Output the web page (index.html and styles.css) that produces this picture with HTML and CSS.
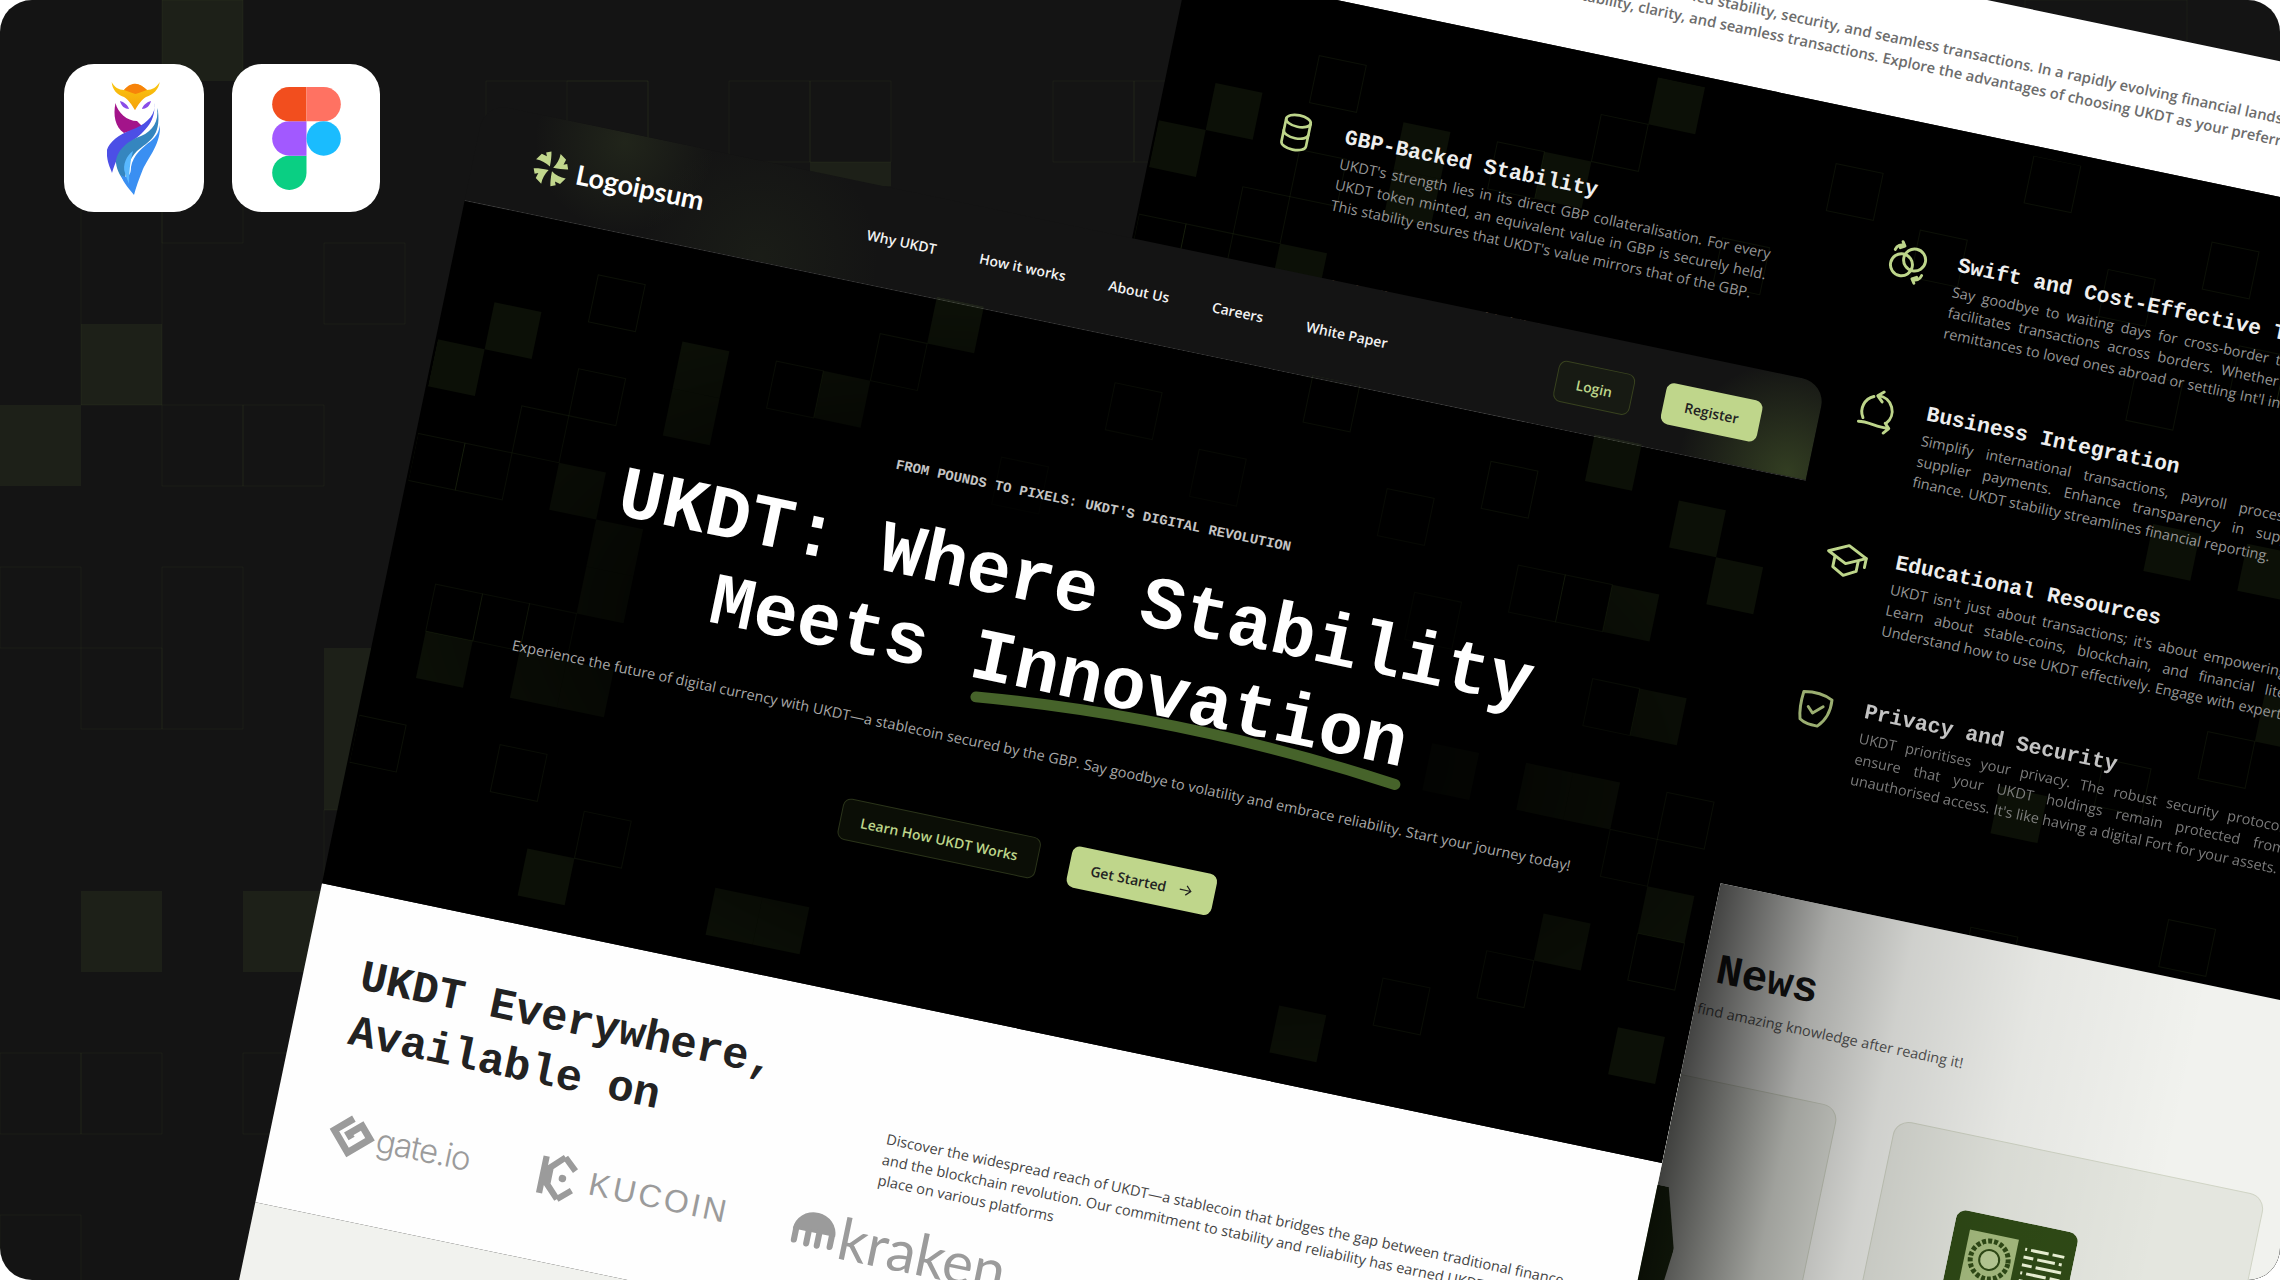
FILE: index.html
```html
<!DOCTYPE html>
<html lang="en">

<head>
    <meta charset="UTF-8">
    <title>UKDT design preview</title>
    <link rel="stylesheet" href="styles.css">
</head>

<body>
    <svg class="defs" width="0" height="0">
        <defs>
            <!-- pixel pattern shared by hero and features, one unit = one cell -->
            <g id="px">
                <g class="px-on">
                    <rect x="1" y="2" width="1" height="1" /><rect x="0" y="3" width="1" height="1" />
                    <rect x="5" y="2" width="1" height="1" /><rect x="5" y="3" width="1" height="1" />
                    <rect x="3" y="5" width="1" height="1" /><rect x="4" y="6" width="1" height="1" />
                    <rect x="4" y="7" width="1" height="1" /><rect x="1" y="9" width="1" height="1" />
                    <rect x="3" y="9" width="1" height="1" /><rect x="4" y="9" width="1" height="1" />
                    <rect x="4" y="13" width="1" height="1" /><rect x="8" y="13" width="1" height="1" />
                    <rect x="9" y="13" width="1" height="1" /><rect x="8" y="2" width="1" height="1" />
                    <rect x="10" y="0" width="1" height="1" /><rect x="20" y="13" width="1" height="1" />
                    <rect x="22" y="7" width="1" height="1" /><rect x="24" y="0" width="1" height="1" />
                    <rect x="24" y="7" width="1" height="1" /><rect x="25" y="7" width="1" height="1" />
                    <rect x="25" y="3" width="1" height="1" /><rect x="26" y="1" width="1" height="1" />
                    <rect x="27" y="2" width="1" height="1" /><rect x="26" y="5" width="1" height="1" />
                    <rect x="27" y="9" width="1" height="1" /><rect x="25" y="10" width="1" height="1" />
                    <rect x="27" y="12" width="1" height="1" />
                </g>
                <g class="px-off">
                    <rect x="3" y="1" width="1" height="1" /><rect x="3" y="3" width="1" height="1" />
                    <rect x="2" y="4" width="1" height="1" /><rect x="0" y="5" width="1" height="1" />
                    <rect x="1" y="5" width="1" height="1" /><rect x="2" y="8" width="1" height="1" />
                    <rect x="3" y="8" width="1" height="1" /><rect x="1" y="8" width="1" height="1" />
                    <rect x="0" y="11" width="1" height="1" /><rect x="3" y="11" width="1" height="1" />
                    <rect x="5" y="12" width="1" height="1" /><rect x="7" y="2" width="1" height="1" />
                    <rect x="9" y="1" width="1" height="1" /><rect x="12" y="3" width="1" height="1" />
                    <rect x="14" y="1" width="1" height="1" /><rect x="16" y="2" width="1" height="1" />
                    <rect x="18" y="0" width="1" height="1" /><rect x="20" y="2" width="1" height="1" />
                    <rect x="23" y="3" width="1" height="1" /><rect x="24" y="3" width="1" height="1" />
                    <rect x="22" y="1" width="1" height="1" /><rect x="25" y="5" width="1" height="1" />
                    <rect x="27" y="7" width="1" height="1" /><rect x="26" y="8" width="1" height="1" />
                    <rect x="24" y="11" width="1" height="1" /><rect x="22" y="12" width="1" height="1" />
                    <rect x="27" y="10" width="1" height="1" /><rect x="21" y="4" width="1" height="1" />
                </g>
            </g>
        </defs>
    </svg>

    <div class="frame">
        <svg class="page-pixels" viewBox="0 0 29 16">
            <g class="page-on">
                <rect x="2" y="0" width="1" height="1" /><rect x="1" y="4" width="1" height="1" />
                <rect x="0" y="5" width="1" height="1" /><rect x="1" y="11" width="1" height="1" />
                <rect x="3" y="11" width="1" height="1" /><rect x="10" y="2" width="1" height="0.3" />
                <rect x="4" y="8" width="1" height="1" /><rect x="4" y="9" width="1" height="1" />
            </g>
            <g class="page-off">
                <rect x="2" y="0" width="1" height="3" /><rect x="4" y="3" width="1" height="1" />
                <rect x="3" y="5" width="1" height="1" /><rect x="1" y="2" width="1" height="3" />
                <rect x="6" y="1" width="2" height="2" /><rect x="7" y="1" width="1" height="2" />
                <rect x="9" y="1" width="1" height="1" /><rect x="10" y="1" width="1" height="1" />
                <rect x="13" y="1" width="1" height="1" /><rect x="14" y="1" width="1" height="1" />
                <rect x="0" y="7" width="1" height="1" /><rect x="2" y="5" width="1" height="1" />
                <rect x="2" y="7" width="1" height="2" /><rect x="0" y="13" width="1" height="1" />
                <rect x="1" y="13" width="1" height="1" /><rect x="3" y="13" width="1" height="1" />
                <rect x="0" y="15" width="1" height="1" /><rect x="4" y="10" width="1" height="1" />
                <rect x="25" y="0" width="2" height="1" /><rect x="1" y="8" width="1" height="1" />
            </g>
        </svg>

        <div class="tiles">
            <div class="tile tile-owl">
                <svg class="owl" viewBox="0 0 54 114">
                    <defs>
                        <linearGradient id="crown" x1="0" y1="0" x2="0" y2="1">
                            <stop offset="0" stop-color="#f9c80e" />
                            <stop offset="1" stop-color="#f6a10c" />
                        </linearGradient>
                    </defs>
                    <path fill="#a3148a" d="M8.5 22C6 34 8 46 17 52L36 46L30 40C20 40 11 32 8.5 22Z" />
                    <path fill="#4c4fe6" d="M47 22C50 34 38 44 24 49C8 55-3 66 0 75C1 84 4 88 5 92C8 82 12 72 20 64C34 54 50 42 47 22Z" />
                    <path fill="#3586bf" d="M50 27C52 40 46 50 34 55C20 60 9 70 9 82C10 90 14 96 18 101C18 90 22 78 30 70C42 60 54 56 51 30Z" />
                    <path fill="#3a8ff2" d="M53 44C54 62 42 76 36 88C32 98 29 106 27 114C24 110 16 102 14 94C20 98 24 95 24 86C26 74 36 66 44 60C50 55 52 50 53 44Z" />
                    <path fill="#58b8ff" d="M26 70C20 74 15 84 18 92C19 96 21 100 22 103C22 92 23 80 26 70Z" />
                    <path fill="url(#crown)" d="M4.7 1C5 8 10 14 17 16C21 18 25 24 28 29.3C31 24 35 18 39 16C46 14 52 8 52.7 1C50 6 45 9 40 9C36 5 32 3 28.5 3C25 3 21 5 17 9C12 9 7 6 4.7 1Z" />
                    <path fill="#f7830a" d="M17 9C21 4 25 2.7 28.5 2.7C32 2.7 36 5 40 9C36 10 33 12 28.5 13C24 12 21 10 17 9Z" />
                    <path fill="#8a4de8" d="M13 20C17 21 21 24 22 28C18 28 14 25 13 20ZM44 20C40 21 36 24 35 28C39 28 43 25 44 20Z" />
                </svg>
            </div>
            <div class="tile tile-figma">
                <svg class="figma" viewBox="0 0 200 300">
                    <path fill="#0acf83" d="M50 300c27.6 0 50-22.400 50-50v-50H50c-27.600 0-50 22.400-50 50s22.400 50 50 50z" />
                    <path fill="#a259ff" d="M0 150c0-27.600 22.400-50 50-50h50v100H50c-27.600 0-50-22.400-50-50z" />
                    <path fill="#f24e1e" d="M0 50C0 22.400 22.400 0 50 0h50v100H50C22.400 100 0 77.600 0 50z" />
                    <path fill="#ff7262" d="M100 0h50c27.600 0 50 22.400 50 50s-22.400 50-50 50h-50V0z" />
                    <path fill="#1abcfe" d="M200 150c0 27.600-22.400 50-50 50s-50-22.400-50-50 22.400-50 50-50 50 22.400 50 50z" />
                </svg>
            </div>
        </div>

        <div class="stage">
            <!-- features board, behind the main one -->
            <section class="board board-why">
                <div class="why-top">
                    <p class="why-line why-line-a">Choose UKDT for unmatched stability, security, and seamless transactions. In a rapidly evolving financial landscape, UKDT stands out.</p>
                    <p class="why-line why-line-b">Enjoy stability, clarity, and seamless transactions. Explore the advantages of choosing UKDT as your preferred digital currency.</p>
                </div>
                <div class="why-body">
                    <svg class="pixels pixels-why" viewBox="0 0 29 30">
                        <use href="#px" />
                        <g class="px-on">
                            <rect x="13" y="16" width="1" height="1" /><rect x="13" y="19" width="1" height="1" />
                        </g>
                        <g class="px-off">
                            <rect x="12" y="17" width="1" height="1" /><rect x="20" y="16" width="1" height="1" />
                            <rect x="24" y="15" width="1" height="1" />
                        </g>
                    </svg>
                    <div class="features">
                        <div class="feature-col">
                            <div class="feature">
                                <svg class="feature-icon" viewBox="0 0 24 24">
                                    <ellipse cx="12" cy="5" rx="7.500" ry="3.500" />
                                    <path d="M4.500 5v14c0 2 3.400 3.500 7.500 3.500s7.500-1.500 7.500-3.500V5" />
                                    <path d="M4.500 12c0 2 3.400 3.500 7.500 3.500s7.500-1.500 7.500-3.500" />
                                </svg>
                                <div class="feature-text">
                                    <h3>GBP-Backed Stability</h3>
                                    <p>UKDT's strength lies in its direct GBP collateralisation. For every UKDT token minted, an equivalent value in GBP is securely held. This stability ensures that UKDT's value mirrors that of the GBP.</p>
                                </div>
                            </div>
                            <div class="feature">
                                <svg class="feature-icon" viewBox="0 0 24 24"></svg>
                                <div class="feature-text">
                                    <h3>Global Accessibility</h3>
                                </div>
                            </div>
                        </div>
                        <div class="feature-col">
                            <div class="feature">
                                <svg class="feature-icon" viewBox="0 0 24 24">
                                    <circle cx="8.500" cy="14" r="6" />
                                    <circle cx="15" cy="10" r="6" />
                                    <path d="M3.500 6.500C4 4 6 3 8 3.500M6.800 1.500L8.300 3.600L6 5" />
                                    <path d="M20.500 17.500C20 20 18 21 16 20.500M17.200 22.500L15.700 20.400L18 19" />
                                </svg>
                                <div class="feature-text">
                                    <h3>Swift and Cost-Effective Transfers</h3>
                                    <p>Say goodbye to waiting days for cross-border transfers. UKDT facilitates transactions across borders. Whether you're paying remittances to loved ones abroad or settling Int'l invoices.</p>
                                </div>
                            </div>
                            <div class="feature">
                                <svg class="feature-icon" viewBox="0 0 24 24">
                                    <path d="M11 3.500A8.500 8.500 0 0 1 18 17.500" />
                                    <path d="M8.500 4.500A8.500 8.500 0 0 0 5 17" />
                                    <path d="M13.500 1L10.500 3.700L13.500 6.500" />
                                    <path d="M3 19.500C8 18.500 13 20.500 19.500 20M17.500 17.500L20 20L17.500 23" />
                                </svg>
                                <div class="feature-text">
                                    <h3>Business Integration</h3>
                                    <p>Simplify international transactions, payroll processing, and supplier payments. Enhance transparency in supply chain finance. UKDT stability streamlines financial reporting.</p>
                                </div>
                            </div>
                            <div class="feature">
                                <svg class="feature-icon" viewBox="0 0 24 24">
                                    <path d="M1.500 9L12 4L22.500 9L12 14Z" />
                                    <path d="M5.500 11.500V17L12 20.500L18.500 17V11.500" />
                                    <path d="M22.500 9V14" />
                                </svg>
                                <div class="feature-text">
                                    <h3>Educational Resources</h3>
                                    <p>UKDT isn't just about transactions; it's about empowering you. Learn about stable-coins, blockchain, and financial literacy. Understand how to use UKDT effectively. Engage with experts.</p>
                                </div>
                            </div>
                            <div class="feature feature-dim">
                                <svg class="feature-icon" viewBox="0 0 24 24">
                                    <path d="M4 4C9 3 15 3 20 5.500C20.500 11 19 17 15 21C11 21 8 21 5 19C3.500 14 3.500 9 4 4Z" />
                                    <path d="M8 11.500L11 14.500L16 10" />
                                </svg>
                                <div class="feature-text">
                                    <h3>Privacy and Security</h3>
                                    <p>UKDT prioritises your privacy. The robust security protocols ensure that your UKDT holdings remain protected from unauthorised access. It's like having a digital Fort for your assets.</p>
                                </div>
                            </div>
                        </div>
                    </div>
                </div>
            </section>

            <!-- main landing page -->
            <section class="board board-main">
                <header class="nav">
                    <div class="brand">
                        <svg class="brand-mark" viewBox="-18 -18 36 36">
                            <path d="M-1.500-2C-1.500-8-2-13-3-17L-8-15L-6.500-11.500L-12-13L-16.500-6.500C-11-6.500-6-5-1.500-2Z" />
                            <path d="M-1.500-2C-1.500-8-2-13-3-17L-8-15L-6.500-11.500L-12-13L-16.500-6.500C-11-6.500-6-5-1.500-2Z" transform="rotate(90)" />
                            <path d="M-1.500-2C-1.500-8-2-13-3-17L-8-15L-6.500-11.500L-12-13L-16.500-6.500C-11-6.500-6-5-1.500-2Z" transform="rotate(180)" />
                            <path d="M-1.500-2C-1.500-8-2-13-3-17L-8-15L-6.500-11.500L-12-13L-16.500-6.500C-11-6.500-6-5-1.500-2Z" transform="rotate(270)" />
                        </svg>
                        <span class="brand-name">Logoipsum</span>
                    </div>
                    <nav class="nav-links">
                        <a>Why UKDT</a>
                        <a>How it works</a>
                        <a>About Us</a>
                        <a>Careers</a>
                        <a>White Paper</a>
                    </nav>
                    <div class="nav-btns">
                        <a class="btn btn-ghost">Login</a>
                        <a class="btn btn-solid btn-reg">Register</a>
                    </div>
                </header>

                <div class="hero">
                    <svg class="pixels pixels-hero" viewBox="0 0 29 15">
                        <use href="#px" />
                    </svg>
                    <p class="eyebrow">FROM POUNDS TO PIXELS: UKDT'S DIGITAL REVOLUTION</p>
                    <h1>UKDT: Where Stability<br>Meets <span class="marked">Innovation<svg class="swoosh" viewBox="0 0 444 24">
                                <path d="M6 18Q218-6 436 18" />
                            </svg></span></h1>
                    <p class="hero-sub">Experience the future of digital currency with UKDT—a stablecoin secured by the GBP. Say goodbye to volatility and embrace reliability. Start your journey today!</p>
                    <div class="hero-btns">
                        <a class="btn btn-ghost btn-wide">Learn How UKDT Works</a>
                        <a class="btn btn-solid btn-arrow">Get Started
                            <svg viewBox="0 0 16 16">
                                <path d="M2 8H14M9 3L14 8L9 13" />
                            </svg>
                        </a>
                    </div>
                </div>

                <div class="listed">
                    <h2>UKDT Everywhere,<br>Available on</h2>
                    <p class="listed-text">Discover the widespread reach of UKDT—a stablecoin that bridges the gap between traditional finance<br>and the blockchain revolution. Our commitment to stability and reliability has earned UKDT a prominent<br>place on various platforms</p>
                    <div class="logos">
                        <div class="logo logo-gate">
                            <svg viewBox="0 0 48 48">
                                <path class="logo-g" transform="rotate(-42 24 24)" d="M33.500 11H11V37H37V21.500H21.500V27" />
                            </svg>
                            <span>gate.io</span>
                        </div>
                        <div class="logo logo-kucoin">
                            <svg viewBox="0 0 36 40">
                                <path class="logo-line" d="M5 5V35M20 3L10 13V27L20 37M20 3L30 12M20 37L30 28" />
                                <circle cx="21" cy="20" r="3" />
                            </svg>
                            <span>KUCOIN</span>
                        </div>
                        <div class="logo logo-kraken">
                            <svg viewBox="0 0 34 27">
                                <path d="M1 15A16 15 0 0 1 33 15Z" />
                                <path class="logo-leg" d="M3.500 14V23M13 14V24M21 14V24M30.500 14V23" />
                            </svg>
                            <span>kraken</span>
                        </div>
                    </div>
                </div>
                <div class="listed-next"></div>
            </section>

            <!-- news board, butts against the main one -->
            <section class="board board-news">
                <div class="news-title">
                    <h2>News</h2>
                    <p>find amazing knowledge after reading it!</p>
                </div>
                <div class="news-cards">
                    <div class="news-card">
                        <div class="news-art-cut"></div>
                    </div>
                    <div class="news-card">
                        <svg class="news-art" viewBox="0 0 124 124">
                            <rect class="art-bg" width="124" height="124" rx="10" />
                            <rect class="art-hatch" x="16" y="18" width="50" height="52" />
                            <circle class="art-gear" cx="41" cy="44" r="19" />
                            <circle class="art-hub" cx="41" cy="44" r="10" />
                            <path class="art-lines" d="M74 26h2M80 26h18M102 26h12M74 34h10M88 34h18M110 34h3M74 42h10M88 42h26M74 50h2M80 50h20M104 50h10M74 58h10M88 58h14" />
                        </svg>
                    </div>
                </div>
                <div class="news-shade"></div>
            </section>
        </div>
    </div>
</body>

</html>
```
FILE: styles.css
```css
* {
    margin: 0;
    padding: 0;
    box-sizing: border-box;
}

body {
    background: #fff;
    font-family: "Open Sans", "Noto Sans", sans-serif;
    overflow: hidden;
}

a {
    color: inherit;
}

.defs {
    position: absolute;
}

.frame {
    position: relative;
    width: 2280px;
    height: 1280px;
    background: #141414;
    border-radius: 32px;
    overflow: hidden;
}

/* backdrop cells */
.page-pixels {
    position: absolute;
    top: 0;
    left: 0;
    width: 2349px;
    height: 1296px;
}

.page-on rect {
    fill: #8ab04a;
    fill-opacity: 0.08;
}

.page-off rect {
    fill: none;
    stroke: #8ab04a;
    stroke-opacity: 0.06;
    stroke-width: 1px;
    vector-effect: non-scaling-stroke;
}

.px-on rect {
    fill: #8ab04a;
    fill-opacity: 0.09;
}

.px-off rect {
    fill: none;
    stroke: #8ab04a;
    stroke-opacity: 0.09;
    stroke-width: 1px;
    vector-effect: non-scaling-stroke;
}

/* app tiles */
.tiles {
    position: absolute;
    top: 64px;
    left: 64px;
    display: flex;
    gap: 28px;
}

.tile {
    height: 148px;
    background: #fff;
    border-radius: 30px;
    display: flex;
    align-items: center;
    justify-content: center;
}

.tile-owl {
    width: 140px;
}

.tile-figma {
    width: 148px;
}

.owl {
    width: 54px;
    height: 114px;
}

.figma {
    width: 69px;
    height: 103px;
}

/* rotated canvas */
.stage {
    position: absolute;
    top: 103px;
    left: 485px;
    transform-origin: 0 0;
    transform: rotate(11.8deg);
}

.board {
    position: absolute;
}

.board-why {
    top: -408px;
    left: 661px;
    width: 1400px;
    color: #eee;
}

.why-top {
    height: 133px;
    background: #fff;
    padding-top: 44px;
    border-radius: 24px 24px 0 0;
    color: #6c6c6c;
    font-size: 14.8px;
    font-weight: 600;
    line-height: 22px;
    white-space: nowrap;
}

.why-line-a {
    padding-left: 315px;
}

.why-line-b {
    padding-left: 341px;
}

.why-body {
    position: relative;
    height: 1300px;
    background: #000;
}

.pixels {
    position: absolute;
    left: 2px;
    width: 1392px;
}

.pixels-why {
    top: 10px;
    height: 1440px;
}

.pixels-hero {
    top: -3px;
    height: 720px;
    z-index: -2;
    -webkit-mask-image: radial-gradient(ellipse at center, rgba(0, 0, 0, 0.2) 35%, #000 72%);
    mask-image: radial-gradient(ellipse at center, rgba(0, 0, 0, 0.2) 35%, #000 72%);
}

.features {
    position: relative;
    display: flex;
    padding: 118px 0 0 119px;
}

.feature-col {
    width: 626px;
}

.feature {
    display: flex;
    gap: 29px;
    height: 152px;
}

.feature-icon {
    flex: none;
    width: 40px;
    height: 40px;
    fill: none;
    stroke: #bdd58a;
    stroke-width: 1.6;
    stroke-linejoin: round;
    stroke-linecap: round;
}

.feature-col + .feature-col .feature-icon {
    width: 44px;
    height: 44px;
    margin: 0 -2px 0 -2px;
}

.feature-text {
    width: 440px;
}

.feature-text h3 {
    font-family: "Liberation Mono", monospace;
    font-size: 21.5px;
    line-height: 30px;
    white-space: nowrap;
}

.feature-text p {
    margin-top: 2px;
    color: #969696;
    font-size: 14.5px;
    line-height: 20.8px;
    text-align: justify;
}

.feature-dim {
    opacity: 0.82;
}

/* main board */
.board-main {
    top: 0;
    left: 0;
    width: 1370px;
}

.nav {
    display: flex;
    align-items: center;
    height: 100px;
    padding: 2px 57px 0 60px;
    border-radius: 24px 24px 0 0;
    border-bottom: 1px solid #3c3c3c;
    background:
        radial-gradient(circle 90px at 145px 10px, rgba(120, 150, 70, 0.13), transparent),
        radial-gradient(circle 110px at 1350px 95px, rgba(130, 170, 70, 0.28), transparent),
        radial-gradient(circle 120px at 300px 95px, rgba(100, 130, 60, 0.08), transparent),
        #141414;
}

.brand {
    display: flex;
    align-items: center;
    gap: 8px;
    width: 341px;
}

.brand-mark {
    width: 36px;
    height: 36px;
    fill: #c1d68c;
}

.brand-name {
    color: #fff;
    font-family: Lato, sans-serif;
    font-size: 27px;
    font-weight: 700;
}

.nav-links {
    display: flex;
    gap: 44px;
    color: #f2f2f2;
    font-size: 14px;
    font-weight: 600;
}

.nav-btns {
    margin: 3px 0 0 auto;
    display: flex;
    gap: 32px;
}

.btn {
    display: flex;
    align-items: center;
    justify-content: center;
    height: 42px;
    border-radius: 8px;
    font-size: 14px;
    font-weight: 600;
}

.btn-ghost {
    width: 78px;
    color: #bdd58a;
    background: #171a13;
    border: 1px solid #38421f;
}

.btn-solid {
    width: 96px;
    color: #222;
    background: #bfd68b;
}

.btn-reg {
    width: 98px;
}

.btn-wide {
    width: 202px;
    background: #0b0e06;
    border-color: #2b341a;
}

.btn-arrow {
    width: 148px;
    gap: 12px;
}

.btn-arrow svg {
    width: 15px;
    height: 15px;
    fill: none;
    stroke: #222;
    stroke-width: 1.300;
}

.hero {
    position: relative;
    z-index: 0;
    height: 697px;
    padding: 160px 14px 0 0;
    background: #000;
    color: #fff;
    text-align: center;
}

.eyebrow {
    font-family: "Liberation Mono", monospace;
    font-size: 14px;
    font-weight: 700;
    line-height: 20px;
    color: #c4c4c4;
}

h1 {
    margin-top: 33px;
    font-family: "Liberation Mono", monospace;
    font-size: 74px;
    font-weight: 700;
    line-height: 86px;
}

.marked {
    position: relative;
}

.swoosh {
    position: absolute;
    left: 7px;
    top: 63px;
    width: 442px;
    height: 24px;
    z-index: -1;
    overflow: visible;
    fill: none;
    stroke: #46632a;
    stroke-width: 11;
    stroke-linecap: round;
}

.hero-sub {
    margin-top: 30px;
    color: #a8a8a8;
    font-size: 14.5px;
    line-height: 20px;
}

.hero-btns {
    margin: 71px 0 0 14px;
    display: flex;
    justify-content: center;
    gap: 32px;
}

/* listed on */
.listed {
    display: grid;
    grid-template-columns: 548px 1fr;
    height: 326px;
    padding: 56px 0 0 57px;
    background: #fefefe;
}

.listed h2 {
    color: #222;
    font-family: "Liberation Mono", monospace;
    font-size: 44px;
    font-weight: 700;
    line-height: 56px;
}

.listed-text {
    align-self: end;
    margin-bottom: 43px;
    color: #444;
    font-size: 14.5px;
    line-height: 20.8px;
    white-space: nowrap;
}

.logos {
    grid-column: 1 / 3;
    display: flex;
    align-items: center;
    gap: 74px;
    margin-top: -15px;
    height: 48px;
    color: #9b9b9b;
}

.logo {
    display: flex;
    align-items: center;
    gap: 13px;
    fill: #9b9b9b;
}

.logo-gate {
    width: 143px;
    gap: 1px;
}

.logo-gate svg {
    width: 48px;
    height: 48px;
    flex: none;
}

.logo-gate span {
    font-family: Inter, sans-serif;
    font-size: 33px;
    font-weight: 300;
    letter-spacing: -1.200px;
}

.logo-g {
    fill: none;
    stroke: #9b9b9b;
    stroke-width: 7;
}

.logo-kucoin {
    gap: 8px;
    margin-left: -5px;
}

.logo-kucoin svg {
    width: 46px;
    height: 50px;
}

.logo-kucoin span {
    font-family: "Liberation Sans", sans-serif;
    font-size: 32px;
    letter-spacing: 3px;
}

.logo-line {
    fill: none;
    stroke: #9b9b9b;
    stroke-width: 5;
}

.logo-leg {
    fill: none;
    stroke: #9b9b9b;
    stroke-width: 4.500;
    stroke-linecap: round;
}

.logo-kraken {
    margin-left: -9px;
    gap: 2px;
}

.logo-kraken svg {
    width: 46px;
    height: 37px;
}

.logo-kraken span {
    font-family: Lato, sans-serif;
    font-size: 58px;
    font-weight: 400;
    line-height: 48px;
}

.listed-next {
    height: 300px;
    background: #f1f2ee;
}

/* news board */
.board-news {
    top: 511px;
    left: 1369px;
    width: 900px;
    height: 700px;
    overflow: hidden;
    background: #f1f2ee;
}

.news-title {
    padding: 64px 0 0 14px;
}

.news-title h2 {
    color: #161616;
    font-family: "Liberation Mono", monospace;
    font-size: 43px;
    font-weight: 700;
    line-height: 46px;
}

.news-title p {
    margin: 6px 0 0 -11px;
    color: #555;
    font-size: 14.5px;
    line-height: 22px;
}

.news-cards {
    display: flex;
    gap: 58px;
    margin: 57px 0 0 -216px;
}

.news-card {
    width: 378px;
    height: 400px;
    flex: none;
    background: #e4e6df;
    border: 1px solid #d0d4c5;
    border-radius: 16px;
}

.news-art {
    display: block;
    width: 124px;
    height: 124px;
    margin: 74px 0 0 78px;
}

.art-bg {
    fill: #2f4a16;
}

.art-hatch {
    fill: #a6bc7f;
}

.art-gear {
    fill: none;
    stroke: #2f4a16;
    stroke-width: 5;
    stroke-dasharray: 4 2;
}

.art-hub {
    fill: #b9cc96;
    stroke: #2f4a16;
    stroke-width: 2;
}

.art-lines {
    fill: none;
    stroke: #ecf3d6;
    stroke-width: 3;
}

.news-art-cut {
    width: 44px;
    height: 200px;
    margin: 112px 0 0 200px;
    background: #243415;
    clip-path: polygon(0 0, 60% 0, 100% 30%, 70% 100%, 0 100%);
}

.news-shade {
    position: absolute;
    top: 0;
    left: 0;
    width: 100%;
    height: 100%;
    background: linear-gradient(to right, rgba(0, 0, 0, 0.72) 0, rgba(0, 0, 0, 0.3) 115px, rgba(0, 0, 0, 0.14) 200px, rgba(0, 0, 0, 0.05) 330px, transparent 500px);
}
```
